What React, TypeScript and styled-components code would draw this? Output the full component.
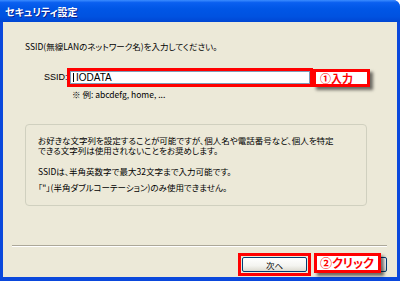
import React from 'react'
import styled, { createGlobalStyle } from 'styled-components'

const GlobalStyle = createGlobalStyle`
  html, body {
    margin: 0;
    padding: 0;
  }
  body {
    width: 400px;
    height: 281px;
    overflow: hidden;
    background: #ffffff;
    font-family: 'Liberation Sans', 'Noto Sans CJK JP', sans-serif;
  }
`

const Window = styled.div`
  width: 400px;
  height: 281px;
  display: flex;
  flex-direction: column;
  border-top-right-radius: 7px;
  overflow: hidden;
  background: #0843d8;
`

const TitleBar = styled.div`
  height: 22px;
  flex: none;
  display: flex;
  align-items: center;
  padding-left: 5px;
  background: linear-gradient(
    to bottom,
    #3b8cff 0%,
    #0a5ff0 12%,
    #0056e6 40%,
    #0052e0 75%,
    #0046d3 100%
  );
  color: #ffffff;
  font-family: 'Noto Sans CJK JP', sans-serif;
  font-weight: bold;
  font-size: 10px;
  font-feature-settings: 'palt';
  text-shadow: 1px 1px 0 #0a1f8f;
`

const Frame = styled.div`
  flex: 1;
  display: flex;
  padding: 0 3px 4px 3px;
  background: #0a48dc;
`

const Client = styled.div`
  flex: 1;
  display: flex;
  flex-direction: column;
  background: #ece9d8;
  color: #000000;
  font-family: 'Noto Sans CJK JP', sans-serif;
  font-size: 8.5px;
  font-feature-settings: 'palt';
  line-height: 10px;
`

const Intro = styled.div`
  margin: 19px 0 0 22px;
`

const FieldRow = styled.div`
  display: flex;
  align-items: flex-start;
  margin-top: 17px;
  padding-left: 41px;
`

const FieldLabel = styled.span`
  width: 23px;
  margin-top: 4px;
  font-family: 'Liberation Sans', sans-serif;
  font-size: 9px;
`

const Highlight = styled.div`
  border: 3px solid #ff0000;
  display: flex;
`

const TextInput = styled.div`
  width: 236px;
  height: 11px;
  border: 1px solid #7f9db9;
  background: #ffffff;
  display: flex;
  align-items: center;
  padding-left: 2px;
  font-family: 'Liberation Sans', sans-serif;
  font-size: 10px;
`

const Caret = styled.span`
  width: 1px;
  height: 9px;
  background: #000000;
  margin-right: 2px;
`

const Callout = styled.div<{ $size: number }>`
  background: #ffffff;
  border: 3px solid #ff0000;
  color: #ff0000;
  font-weight: bold;
  font-size: ${(p) => p.$size}px;
  line-height: 12px;
  box-shadow: 3px 3px 3px rgba(0, 0, 0, 0.55);
  display: flex;
  align-items: center;
`

const InputCallout = styled(Callout)`
  width: 47px;
  height: 12px;
  margin-top: 1px;
  padding-left: 4px;
`

const Note = styled.div`
  margin: 2px 0 0 69px;
`

const Group = styled.div`
  margin: 25px 0 0 22px;
  width: 328px;
  height: 70px;
  padding: 10px 0 0 12px;
  border: 1px solid #d0d0bf;
  border-radius: 4px;
  display: flex;
  flex-direction: column;
`

const Para = styled.p<{ $gap: number }>`
  margin: ${(p) => p.$gap}px 0 0 0;
`

const Separator = styled.div`
  margin: 39px 10px 0 9px;
  height: 1px;
  background: #aca899;
  border-bottom: 1px solid #ffffff;
`

const ButtonRow = styled.div`
  position: relative;
  display: flex;
  justify-content: flex-end;
  gap: 6px;
  margin-top: 6px;
  padding-right: 10px;
`

const NextFrame = styled.div`
  border: 3px solid #ff0000;
  padding: 1px;
  display: flex;
`

const Button = styled.div`
  width: 63px;
  height: 13px;
  border: 1px solid #003c74;
  border-radius: 2px;
  background: linear-gradient(to bottom, #ffffff 0%, #f4f4f0 60%, #dcdad0 100%);
  display: flex;
  align-items: center;
  justify-content: center;
  font-size: 8.5px;
`

const CancelButton = styled(Button)`
  margin-top: 4px;
  width: 68px;
`

const ClickCallout = styled(Callout)`
  position: absolute;
  left: 311px;
  top: 0;
  width: 58px;
  height: 14px;
  padding-left: 3px;
`

const App: React.FC = () => {
  return (
    <>
      <GlobalStyle />
      <Window>
        <TitleBar>セキュリティ設定</TitleBar>
        <Frame>
          <Client>
            <Intro>SSID(無線LANのネットワーク名)を入力してください。</Intro>

            <FieldRow>
              <FieldLabel>SSID:</FieldLabel>
              <Highlight>
                <TextInput>
                  <Caret />
                  IODATA
                </TextInput>
              </Highlight>
              <InputCallout $size={11}>①入力</InputCallout>
            </FieldRow>
            <Note>※ 例: abcdefg, home, ...</Note>

            <Group>
              <Para $gap={0}>
                お好きな文字列を設定することが可能ですが、個人名や電話番号など、個人を特定
                <br />
                できる文字列は使用されないことをお奨めします。
              </Para>
              <Para $gap={11}>SSIDは、半角英数字で最大32文字まで入力可能です。</Para>
              <Para $gap={6}>「"」(半角ダブルコーテーション)のみ使用できません。</Para>
            </Group>

            <Separator />

            <ButtonRow>
              <NextFrame>
                <Button>次へ</Button>
              </NextFrame>
              <CancelButton aria-hidden="true" />
              <ClickCallout $size={12}>②クリック</ClickCallout>
            </ButtonRow>
          </Client>
        </Frame>
      </Window>
    </>
  )
}

export default App
